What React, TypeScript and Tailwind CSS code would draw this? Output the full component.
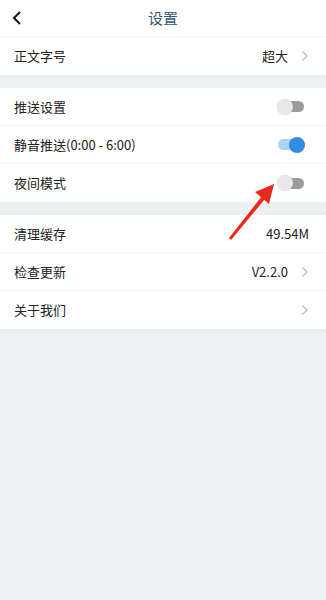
import React from "react";

const font = { fontFamily: '"Noto Sans CJK SC", "Noto Sans", sans-serif' };

function Chevron() {
  return (
    <svg width="8" height="12" viewBox="0 0 8 12" className="ml-[13px]">
      <path d="M1.5 1.5 L6 6 L1.5 10.5" fill="none" stroke="#b5b5b5" strokeWidth="1.1" />
    </svg>
  );
}

function Toggle({ on }: { on: boolean }) {
  return (
    <div className="relative w-[28px] h-[18px] flex items-center mr-[4px]">
      <div className={on ? "w-[26px] h-[11px] rounded-full bg-[#a9d3f5] ml-[1px]" : "w-[26px] h-[11px] rounded-full bg-[#9c9c9c] ml-[1px]"} />
      <div
        className={
          on
            ? "absolute right-0 top-[1px] w-[16px] h-[16px] rounded-full bg-[#2e8ce2]"
            : "absolute left-0 top-[1px] w-[16px] h-[16px] rounded-full bg-[#e8e8e8] shadow-[0_0_1px_rgba(0,0,0,0.2)]"
        }
      />
    </div>
  );
}

function Row({ label, right, border = true }: { label: string; right: React.ReactNode; border?: boolean }) {
  return (
    <div className={border ? "h-[38px] flex items-center justify-between pl-[14px] pr-[17px] border-b border-[#f0f2f3]" : "h-[38px] flex items-center justify-between pl-[14px] pr-[17px]"}>
      <span className="text-[13px] text-[#222]">{label}</span>
      <div className="flex items-center">{right}</div>
    </div>
  );
}

export default function App() {
  return (
    <div className="relative w-[326px] h-[600px] bg-[#edf0f1] overflow-hidden" style={font}>
      <div className="h-[37px] bg-white relative flex items-center justify-center border-b border-[#f0f2f3]">
        <svg width="12" height="16" viewBox="0 0 12 16" className="absolute left-[11px] top-[10px]">
          <path d="M9 2 L3 8 L9 14" fill="none" stroke="#111" strokeWidth="2" />
        </svg>
        <span className="text-[15px] text-[#3c5876]">设置</span>
      </div>
      <div className="bg-white">
        <Row
          label="正文字号"
          border={false}
          right={
            <>
              <span className="text-[13px] text-[#222]">超大</span>
              <Chevron />
            </>
          }
        />
      </div>
      <div className="h-[13px]" />
      <div className="bg-white">
        <Row label="推送设置" right={<Toggle on={false} />} />
        <Row label="静音推送(0:00 - 6:00)" right={<Toggle on={true} />} />
        <Row label="夜间模式" border={false} right={<Toggle on={false} />} />
      </div>
      <div className="h-[13px]" />
      <div className="bg-white">
        <Row label="清理缓存" right={<span className="text-[13px] text-[#222]">49.54M</span>} />
        <Row
          label="检查更新"
          right={
            <>
              <span className="text-[13px] text-[#222]">V2.2.0</span>
              <Chevron />
            </>
          }
        />
        <Row label="关于我们" border={false} right={<Chevron />} />
      </div>
      <svg className="absolute left-0 top-0 pointer-events-none" width="326" height="600">
        <path d="M229 238 L262 196 L265 199 L231 240 Z" fill="#e8291c" />
        <path d="M274 184 L255 192 L269 204 Z" fill="#e8291c" />
      </svg>
    </div>
  );
}
